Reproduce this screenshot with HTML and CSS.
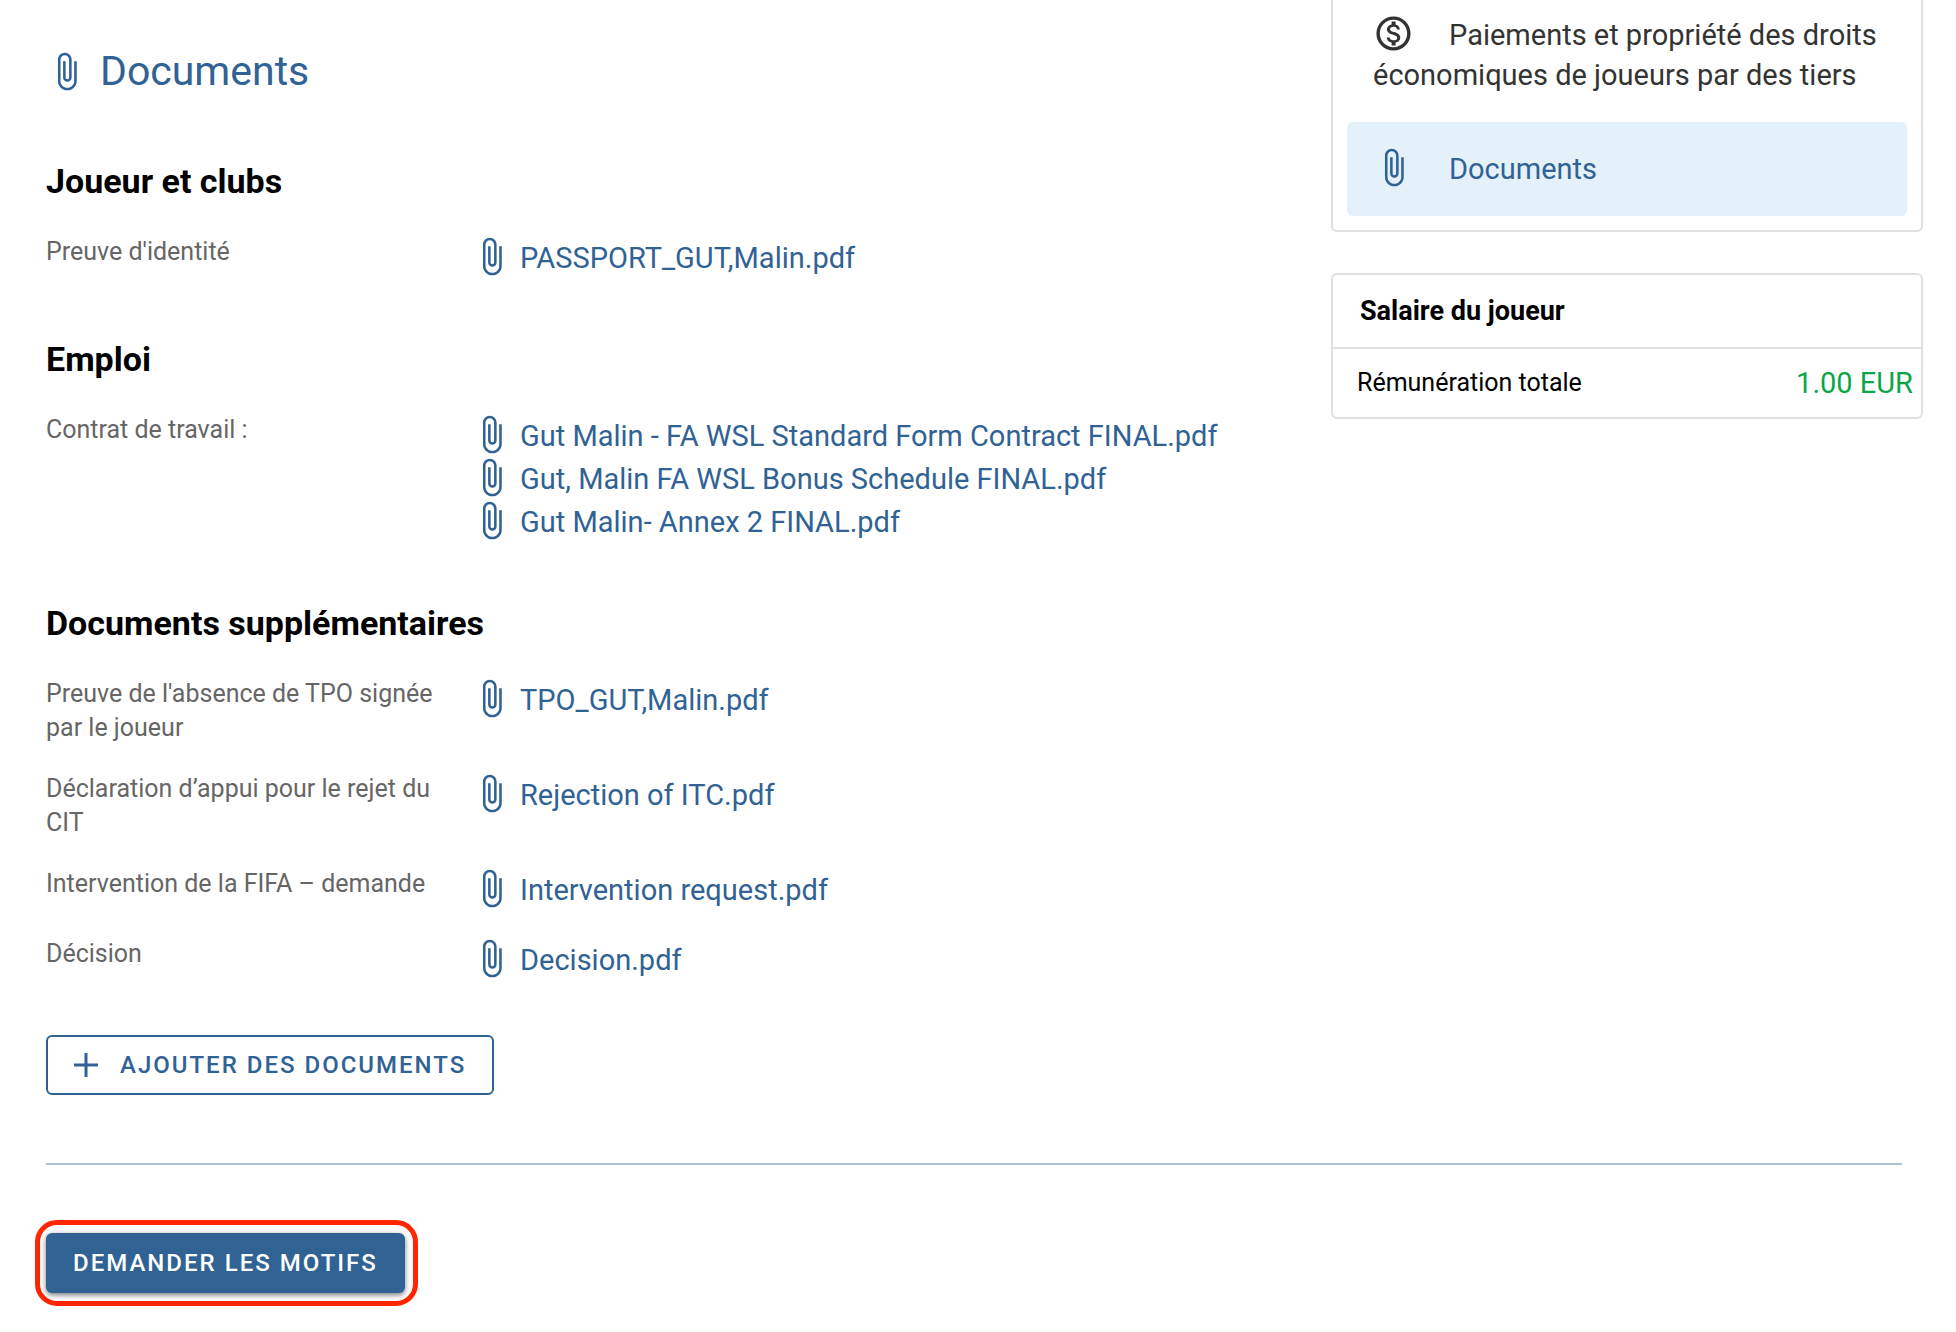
FILE: index.html
```html
<!DOCTYPE html>
<html lang="fr">
<head>
<meta charset="utf-8">
<meta name="viewport" content="width=device-width, initial-scale=1">
<title>Documents</title>
<link rel="stylesheet" href="styles.css">
</head>
<body>
<svg class="sprite" aria-hidden="true">
  <symbol id="clip" viewBox="0 0 24 24"><path d="M16.5 6v11.5c0 2.21-1.79 4-4 4s-4-1.79-4-4V5a2.5 2.5 0 0 1 5 0v10.5c0 .55-.45 1-1 1s-1-.45-1-1V6H10v9.5a2.5 2.5 0 0 0 5 0V5c0-2.21-1.79-4-4-4S7 2.79 7 5v12.5c0 3.04 2.46 5.5 5.5 5.5s5.5-2.46 5.5-5.5V6z"/></symbol>
  <symbol id="money" viewBox="0 0 24 24"><path d="M12 2C6.48 2 2 6.48 2 12s4.48 10 10 10 10-4.48 10-10S17.52 2 12 2zm0 18c-4.41 0-8-3.59-8-8s3.59-8 8-8 8 3.59 8 8-3.59 8-8 8zm.31-8.86c-1.77-.45-2.34-.94-2.34-1.67 0-.84.79-1.43 2.1-1.43 1.38 0 1.9.66 1.94 1.64h1.71c-.05-1.34-.87-2.57-2.49-2.97V5H10.9v1.69c-1.51.32-2.72 1.3-2.72 2.81 0 1.79 1.49 2.69 3.66 3.21 1.95.46 2.34 1.15 2.34 1.87 0 .53-.39 1.39-2.1 1.39-1.6 0-2.23-.72-2.32-1.64H8.04c.1 1.7 1.36 2.66 2.86 2.97V19h2.34v-1.67c1.52-.29 2.72-1.16 2.73-2.77-.01-2.2-1.9-2.96-3.66-3.42z"/></symbol>
</svg>
<div class="page">
  <div class="columns">
    <main class="main">
      <h1 class="title"><svg class="icon" aria-hidden="true"><use href="#clip"/></svg>Documents</h1>

      <section class="section">
        <h2 class="heading">Joueur et clubs</h2>
        <dl class="rows">
          <div class="row">
            <dt class="label">Preuve d'identité</dt>
            <dd class="files"><a class="file" href="#"><svg class="icon" aria-hidden="true"><use href="#clip"/></svg>PASSPORT_GUT,Malin.pdf</a></dd>
          </div>
        </dl>
      </section>

      <section class="section">
        <h2 class="heading">Emploi</h2>
        <dl class="rows">
          <div class="row">
            <dt class="label">Contrat de travail :</dt>
            <dd class="files">
              <a class="file" href="#"><svg class="icon" aria-hidden="true"><use href="#clip"/></svg>Gut Malin - FA WSL Standard Form Contract FINAL.pdf</a>
              <a class="file" href="#"><svg class="icon" aria-hidden="true"><use href="#clip"/></svg>Gut, Malin FA WSL Bonus Schedule FINAL.pdf</a>
              <a class="file" href="#"><svg class="icon" aria-hidden="true"><use href="#clip"/></svg>Gut Malin- Annex 2 FINAL.pdf</a>
            </dd>
          </div>
        </dl>
      </section>

      <section class="section">
        <h2 class="heading">Documents supplémentaires</h2>
        <dl class="rows">
          <div class="row">
            <dt class="label">Preuve de l'absence de TPO signée par le joueur</dt>
            <dd class="files"><a class="file" href="#"><svg class="icon" aria-hidden="true"><use href="#clip"/></svg>TPO_GUT,Malin.pdf</a></dd>
          </div>
          <div class="row">
            <dt class="label">Déclaration d’appui pour le rejet du CIT</dt>
            <dd class="files"><a class="file" href="#"><svg class="icon" aria-hidden="true"><use href="#clip"/></svg>Rejection of ITC.pdf</a></dd>
          </div>
          <div class="row">
            <dt class="label">Intervention de la FIFA – demande</dt>
            <dd class="files"><a class="file" href="#"><svg class="icon" aria-hidden="true"><use href="#clip"/></svg>Intervention request.pdf</a></dd>
          </div>
          <div class="row">
            <dt class="label">Décision</dt>
            <dd class="files"><a class="file" href="#"><svg class="icon" aria-hidden="true"><use href="#clip"/></svg>Decision.pdf</a></dd>
          </div>
        </dl>
      </section>

      <button class="button button-outline" type="button"><svg class="plus" viewBox="0 0 24 24" aria-hidden="true"><path d="M12 0v24M0 12h24"/></svg>AJOUTER DES DOCUMENTS</button>
    </main>

    <aside class="side">
      <nav class="card menu" aria-label="Sections">
        <a class="item" href="#"><svg class="icon" aria-hidden="true"><use href="#money"/></svg>Paiements et propriété des droits économiques de joueurs par des tiers</a>
        <a class="item item-active" href="#" aria-current="page"><svg class="icon" aria-hidden="true"><use href="#clip"/></svg>Documents</a>
      </nav>
      <section class="card">
        <h2 class="card-title">Salaire du joueur</h2>
        <div class="pay"><span class="pay-label">Rémunération totale</span><span class="pay-value">1.00 EUR</span></div>
      </section>
    </aside>
  </div>

  <footer class="footer">
    <div class="highlight"><button class="button button-solid" type="button">DEMANDER LES MOTIFS</button></div>
  </footer>
</div>
</body>
</html>
```
FILE: styles.css
```css
* { box-sizing: border-box; }

body {
  margin: 0;
  background: #fff;
  color: #000;
  font-family: Roboto, "Liberation Sans", sans-serif;
  font-size: 29px;
  line-height: 40px;
}

h1, h2, dl, dd { margin: 0; }
a { color: inherit; text-decoration: none; }

.sprite { position: absolute; width: 0; height: 0; }

.icon {
  flex: none;
  width: 41px;
  height: 41px;
  fill: currentColor;
  vertical-align: -9px;
}

.page { padding: 0 33px 0 46px; }

.columns {
  display: grid;
  grid-template-columns: minmax(0, 1fr) 592px;
  gap: 46px;
}

.main { padding-top: 47px; }

.title {
  display: flex;
  align-items: center;
  gap: 13px;
  margin-bottom: 65px;
  color: #316294;
  font-size: 41px;
  font-weight: 400;
  line-height: 48px;
}

.section + .section { margin-top: 60px; }

.heading {
  margin-bottom: 33px;
  font-size: 34px;
  font-weight: 700;
  line-height: 42px;
}

.rows {
  display: grid;
  gap: 27px;
}

.row {
  display: grid;
  grid-template-columns: 400px minmax(0, 1fr);
  column-gap: 25px;
}

.label {
  color: #666;
  font-size: 25px;
  line-height: 34px;
}

.files {
  display: flex;
  flex-direction: column;
  align-items: flex-start;
}

.file {
  padding-top: 1px;
  color: #316294;
}

.file .icon { margin-right: 8px; }

.button {
  display: flex;
  align-items: center;
  height: 60px;
  padding: 0 27px;
  border: 0;
  border-radius: 6px;
  font: 500 24px/32px Roboto, "Liberation Sans", sans-serif;
  letter-spacing: 2px;
}

.button-outline {
  gap: 22px;
  margin-top: 55px;
  padding: 0 26px;
  border: 2px solid #316294;
  background: #fff;
  color: #316294;
}

.plus {
  width: 24px;
  height: 24px;
  fill: none;
  stroke: currentColor;
  stroke-width: 3;
}

.button-solid {
  background: #316294;
  color: #fff;
  box-shadow: 0 2px 4px rgba(0, 0, 0, .4), 0 2px 10px rgba(0, 0, 0, .16);
}

.card {
  border: 2px solid #e0e0e0;
  border-radius: 6px;
}

.menu {
  margin-bottom: 41px;
  padding: 0 14px 14px;
  border-top: 0;
  border-radius: 0 0 6px 6px;
}

.item {
  display: block;
  padding: 13px 26px 27px;
  border-radius: 6px;
  color: #333;
}

.item .icon { margin-right: 35px; }

.item-active {
  padding-top: 25px;
  background: #e4f1fb;
  color: #316294;
}

.card-title {
  padding: 16px 27px;
  border-bottom: 2px solid #e0e0e0;
  font-size: 27px;
  font-weight: 700;
}

.pay {
  display: flex;
  justify-content: space-between;
  align-items: center;
  padding: 14px 8px 14px 24px;
}

.pay-label { font-size: 25px; }

.pay-value { color: #0aa648; }

.footer {
  margin: 68px 21px 0 0;
  padding: 55px 0 28px;
  border-top: 2px solid #adc1d6;
}

.highlight {
  width: fit-content;
  margin-left: -11px;
  padding: 8px 8px 8px 6px;
  border: 5px solid #ff2600;
  border-radius: 22px;
}
```
